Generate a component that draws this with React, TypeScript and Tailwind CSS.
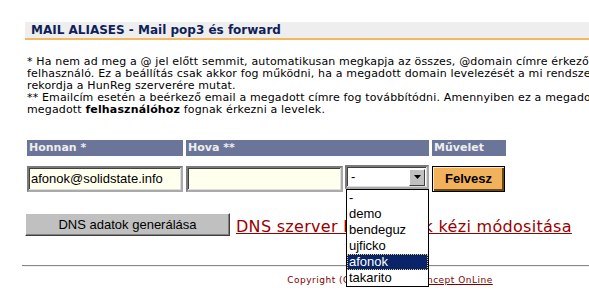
import React from "react";

const V = { fontFamily: '"DejaVu Sans", Verdana, sans-serif' };
const A = { fontFamily: '"Liberation Sans", Arial, sans-serif' };

export default function App() {
  const items = ["-", "demo", "bendeguz", "ujficko", "afonok", "takarito"];
  return (
    <div className="relative w-[589px] h-[297px] overflow-hidden bg-white">
      <div className="w-[780px] flex flex-col">
        {/* Title */}
        <div className="mt-[22px] ml-[25px] mr-0 h-[18px] bg-[#eeeeee] border-b-2 border-[#f4b75c] flex items-center pl-[6px]">
          <span className="text-[12px] font-bold text-[#0f1f5a] leading-none" style={V}>
            MAIL ALIASES - Mail pop3 és forward
          </span>
        </div>

        {/* Notes */}
        <div className="mt-[16px] pl-[27px] text-[11px] tracking-[0.15px] leading-[12px] text-black whitespace-nowrap" style={V}>
          <div>* Ha nem ad meg a @ jel előtt semmit, automatikusan megkapja az összes, @domain címre érkező levelet a megadott</div>
          <div>felhasználó. Ez a beállítás csak akkor fog működni, ha a megadott domain levelezését a mi rendszerünk végzi, vagyis az MX</div>
          <div>rekordja a HunReg szerverére mutat.</div>
          <div>** Emailcím esetén a beérkező email a megadott címre fog továbbítódni. Amennyiben ez a megadott cím üres, akkor a</div>
          <div>megadott <b>felhasználóhoz</b> fognak érkezni a levelek.</div>
        </div>

        {/* Table header */}
        <div className="mt-[24px] ml-[27px] flex gap-[3px] h-[16px]">
          <div className="w-[156px] bg-[#6b7499] text-[#eeeeee] text-[11px] font-bold pl-[2px] flex items-center" style={V}>Honnan *</div>
          <div className="w-[243px] bg-[#6b7499] text-[#eeeeee] text-[11px] font-bold pl-[2px] flex items-center" style={V}>Hova **</div>
          <div className="w-[74px] bg-[#6b7499] text-[#eeeeee] text-[11px] font-bold pl-[2px] flex items-center" style={V}>Művelet</div>
        </div>

        {/* Row */}
        <div className="mt-[10px] ml-[27px] flex items-start h-[27px]">
          <div className="w-[156px] h-[26px] border-2 border-t-[#7b7b7b] border-l-[#7b7b7b] border-b-[#aaaaaa] border-r-[#aaaaaa] bg-[#ffffee] flex items-center pl-[2px] shadow-[inset_-1px_-1px_0_#dcdcdc,inset_1px_1px_0_#404040]">
            <span className="text-[13px] text-black" style={A}>afonok@solidstate.info</span>
          </div>
          <div className="ml-[3px] w-[157px] h-[26px] border-2 border-t-[#7b7b7b] border-l-[#7b7b7b] border-b-[#aaaaaa] border-r-[#aaaaaa] bg-[#ffffee] shadow-[inset_-1px_-1px_0_#dcdcdc,inset_1px_1px_0_#404040]" />
          <div className="ml-[2px] -mt-[1px] w-[84px] h-[24px] border-2 border-t-[#7b7b7b] border-l-[#7b7b7b] border-b-[#aaaaaa] border-r-[#aaaaaa] bg-white flex items-center justify-between shadow-[inset_-1px_-1px_0_#dcdcdc,inset_1px_1px_0_#404040]">
            <span className="pl-[4px] text-[13px] text-black" style={A}>-</span>
            <div className="mr-[2px] w-[16px] h-[17px] bg-[#c0c0c0] border border-t-white border-l-white border-b-[#404040] border-r-[#404040] flex items-center justify-center">
              <svg width="7" height="4" viewBox="0 0 7 4"><path d="M0 0h7L3.5 4z" fill="#000" /></svg>
            </div>
          </div>
          <div className="ml-[3px] w-[73px] h-[26px] border border-black bg-[#f2b25c] flex items-center justify-center shadow-[inset_1px_1px_0_#ffe8c0,inset_-2px_-2px_0_#6b4a10]">
            <span className="text-[13px] font-bold text-black" style={A}>Felvesz</span>
          </div>
        </div>

        {/* DNS row */}
        <div className="mt-[20px] ml-[25px] flex items-end h-[23px]">
          <div className="w-[205px] h-[23px] bg-[#c0c0c0] border border-t-white border-l-white border-b-[#404040] border-r-[#404040] shadow-[inset_-1px_-1px_0_#808080] flex items-center justify-center">
            <span className="text-[13px] text-black" style={A}>DNS adatok generálása</span>
          </div>
          <a className="ml-[6px] text-[16px] tracking-[0.3px] leading-[18px] text-[#990000] underline whitespace-nowrap" style={V}>
            DNS szerver beállítások kézi módositása
          </a>
        </div>

        {/* HR */}
        <div className="mt-[29px] ml-[22px] mr-[22px] h-[2px] border-t border-[#888888] border-b border-b-[#f0f0f0]" />

        {/* Copyright */}
        <div className="mt-[7px] text-center text-[9px] text-[#800000] tracking-[0.5px]" style={V}>
          Copyright (C) 2001-2005 <a className="underline">Concept OnLine</a>
        </div>
      </div>

      {/* Open dropdown list */}
      <div className="absolute left-[346px] top-[189px] w-[83px] border border-black bg-white">
        {items.map((it) => (
          <div
            key={it}
            className={
              it === "afonok"
                ? "h-[16px] leading-[14px] pl-[1px] text-[13px] text-white bg-[#0a246a] border border-dotted border-[#e8d070]"
                : "h-[16px] leading-[16px] pl-[2px] text-[13px] text-black"
            }
            style={A}
          >
            {it}
          </div>
        ))}
      </div>
    </div>
  );
}
